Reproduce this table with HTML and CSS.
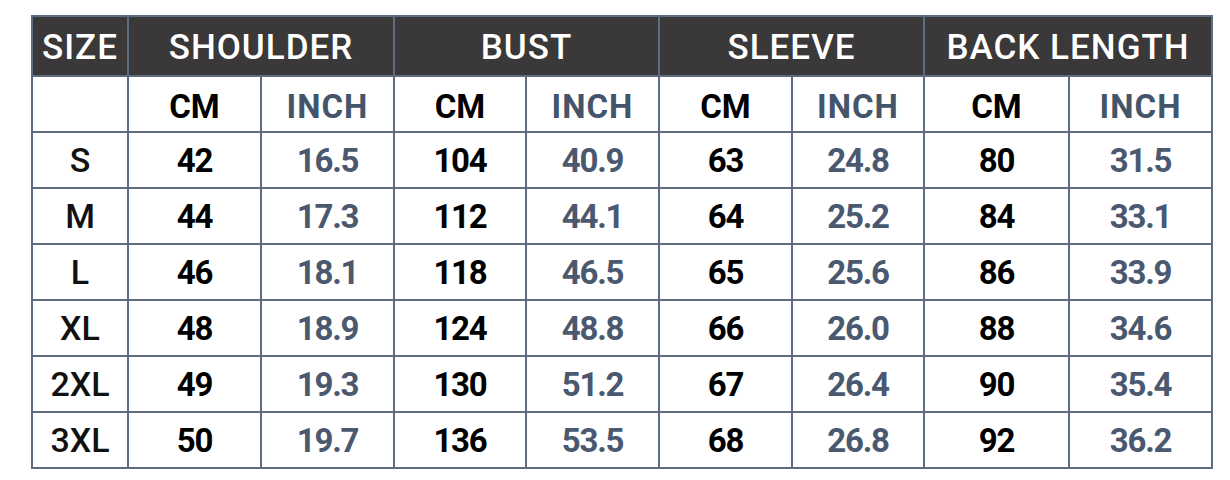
FILE: index.html
```html
<!DOCTYPE html>
<html>
<head>
<meta charset="utf-8">
<link rel="stylesheet" href="styles.css">
</head>
<body>
<table class="chart">
  <colgroup>
    <col class="c-size">
    <col class="c133"><col class="c133">
    <col class="c132"><col class="c133">
    <col class="c133"><col class="c132">
    <col class="c145"><col class="c143">
  </colgroup>
  <thead>
    <tr class="head">
      <th>SIZE</th>
      <th colspan="2">SHOULDER</th>
      <th colspan="2">BUST</th>
      <th colspan="2">SLEEVE</th>
      <th colspan="2">BACK LENGTH</th>
    </tr>
    <tr class="units">
      <th></th>
      <th class="cm">CM</th><th class="in">INCH</th>
      <th class="cm">CM</th><th class="in">INCH</th>
      <th class="cm">CM</th><th class="in">INCH</th>
      <th class="cm">CM</th><th class="in">INCH</th>
    </tr>
  </thead>
  <tbody>
    <tr><td class="sz">S</td><td class="cm">42</td><td class="in">16.5</td><td class="cm">104</td><td class="in">40.9</td><td class="cm">63</td><td class="in">24.8</td><td class="cm">80</td><td class="in">31.5</td></tr>
    <tr><td class="sz">M</td><td class="cm">44</td><td class="in">17.3</td><td class="cm">112</td><td class="in">44.1</td><td class="cm">64</td><td class="in">25.2</td><td class="cm">84</td><td class="in">33.1</td></tr>
    <tr><td class="sz">L</td><td class="cm">46</td><td class="in">18.1</td><td class="cm">118</td><td class="in">46.5</td><td class="cm">65</td><td class="in">25.6</td><td class="cm">86</td><td class="in">33.9</td></tr>
    <tr><td class="sz">XL</td><td class="cm">48</td><td class="in">18.9</td><td class="cm">124</td><td class="in">48.8</td><td class="cm">66</td><td class="in">26.0</td><td class="cm">88</td><td class="in">34.6</td></tr>
    <tr><td class="sz">2XL</td><td class="cm">49</td><td class="in">19.3</td><td class="cm">130</td><td class="in">51.2</td><td class="cm">67</td><td class="in">26.4</td><td class="cm">90</td><td class="in">35.4</td></tr>
    <tr><td class="sz">3XL</td><td class="cm">50</td><td class="in">19.7</td><td class="cm">136</td><td class="in">53.5</td><td class="cm">68</td><td class="in">26.8</td><td class="cm">92</td><td class="in">36.2</td></tr>
  </tbody>
</table>
</body>
</html>
```

FILE: styles.css
```css
html, body {
  margin: 0;
  padding: 0;
  background: #ffffff;
}

body {
  padding: 15px 0 0 31px;
}

.chart {
  border-collapse: collapse;
  table-layout: fixed;
  width: 1182px;
  font-family: Roboto, "Liberation Sans", sans-serif;
}

.c-size { width: 96px; }
.c133 { width: 133px; }
.c132 { width: 132px; }
.c145 { width: 145px; }
.c143 { width: 143px; }

.chart th,
.chart td {
  border: 2px solid #5d6c80;
  padding: 0;
  text-align: center;
  vertical-align: middle;
  line-height: 1;
}

.head th {
  height: 56px;
  background: #3a3838;
  color: #ffffff;
  font-weight: 500;
  font-size: 35px;
  letter-spacing: 1px;
  padding-top: 2px;
}

.units th {
  height: 49px;
  font-size: 33px;
  font-weight: 700;
  padding-top: 5px;
}

.units .cm {
  color: #000000;
}

.units .in {
  color: #44546a;
  letter-spacing: 1px;
}

tbody td {
  height: 54px;
  padding-top: 6px;
}

tbody .sz {
  font-weight: 500;
  font-size: 34px;
  color: #111111;
}

tbody .cm,
tbody .in {
  font-weight: 700;
  font-size: 33px;
  letter-spacing: -1.2px;
}

tbody .cm {
  color: #000000;
}

tbody .in {
  color: #4a5870;
}
```
